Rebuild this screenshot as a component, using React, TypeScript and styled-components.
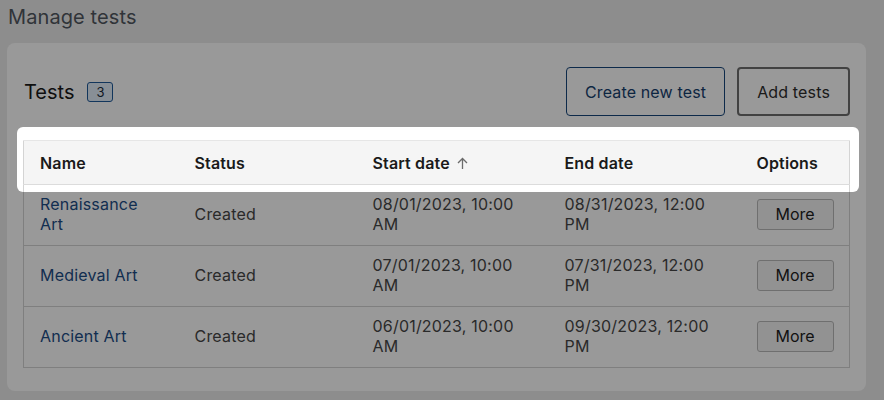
import React from 'react';
import styled, { createGlobalStyle } from 'styled-components';

const GlobalStyle = createGlobalStyle`
  html, body {
    margin: 0;
    padding: 0;
    min-height: 100%;
    background: #ececec;
    font-family: Inter, "Noto Sans", "Liberation Sans", sans-serif;
  }
`;

// Page frame
const Page = styled.div`
  box-sizing: border-box;
  min-height: 100vh;
  padding: 5px 18px 9px 7px;
`;

const PageTitle = styled.h1`
  margin: 0 0 14px 1px;
  font-size: 20px;
  line-height: 24px;
  font-weight: 400;
  letter-spacing: 0.1px;
  color: #51575f;
`;

// The white card that holds the list
const Card = styled.section`
  background: #ffffff;
  border-radius: 8px;
  padding: 24px 16px 23px 16px;
`;

const CardHeader = styled.div`
  display: flex;
  align-items: center;
  justify-content: space-between;
  margin-bottom: 24px;
`;

const TitleGroup = styled.div`
  display: flex;
  align-items: center;
  gap: 13px;
  padding-left: 1px;
`;

const CardTitle = styled.h2`
  margin: 0;
  font-size: 20px;
  line-height: 26px;
  font-weight: 400;
  color: #1a1a1a;
`;

const CountBadge = styled.span`
  display: inline-flex;
  align-items: center;
  justify-content: center;
  box-sizing: border-box;
  width: 26px;
  height: 20px;
  border: 1px solid #1f5a9a;
  border-radius: 3px;
  background: #e3eefa;
  font-size: 13px;
  color: #1d2b3a;
`;

const Actions = styled.div`
  display: flex;
  gap: 12px;
`;

// variant decides the border look of the two top buttons
const ActionButton = styled.button<{ $variant: 'primary' | 'plain' }>`
  box-sizing: border-box;
  height: 49px;
  padding: 0 18px;
  background: #ffffff;
  border-radius: 4px;
  border: ${p => (p.$variant === 'primary' ? '1px solid #17477c' : '2px solid #6f6f6f')};
  color: ${p => (p.$variant === 'primary' ? '#17406e' : '#2d2d2d')};
  font-family: inherit;
  font-size: 16px;
  letter-spacing: 0.15px;
  cursor: pointer;
`;

// Table
const TableWrap = styled.div`
  position: relative;
`;

const Table = styled.table`
  width: 100%;
  border-collapse: collapse;
  table-layout: fixed;
  border: 1px solid #d4d4d4;
`;

const Th = styled.th`
  background: #f5f5f5;
  text-align: left;
  font-size: 16px;
  line-height: 20px;
  font-weight: 600;
  letter-spacing: 0.15px;
  color: #1a1a1a;
  padding: 12px 16px 11px 16px;
  border-top: 1px solid #e6e6e6;
  border-bottom: 1px solid #dcdcdc;
`;

const SortIcon = styled.svg`
  margin-left: 7px;
  vertical-align: -1px;
`;

const Td = styled.td`
  font-size: 16px;
  line-height: 20px;
  letter-spacing: 0.2px;
  color: #474747;
  padding: 9px 16px 11px 16px;
  border-bottom: 1px solid #d4d4d4;
  vertical-align: middle;
`;

const TestLink = styled.a`
  color: #1d4d86;
  text-decoration: none;
  cursor: pointer;
`;

const MoreButton = styled.button`
  box-sizing: border-box;
  width: 77px;
  height: 31px;
  background: #f4f4f4;
  border: 1px solid #b9b9b9;
  border-radius: 3px;
  font-family: inherit;
  font-size: 16px;
  color: #1e1e1e;
  cursor: pointer;
`;

// Tour spotlight over the table header
const Spotlight = styled.div`
  position: absolute;
  top: -13px;
  left: -6px;
  right: -9px;
  height: 65px;
  border-radius: 6px;
  box-shadow: 0 0 0 3000px rgba(0, 0, 0, 0.4);
  pointer-events: none;
  z-index: 10;
`;

const tests = [
  { name: 'Renaissance Art', status: 'Created', start: '08/01/2023, 10:00 AM', end: '08/31/2023, 12:00 PM' },
  { name: 'Medieval Art', status: 'Created', start: '07/01/2023, 10:00 AM', end: '07/31/2023, 12:00 PM' },
  { name: 'Ancient Art', status: 'Created', start: '06/01/2023, 10:00 AM', end: '09/30/2023, 12:00 PM' },
];

export default function App() {
  return (
    <>
      <GlobalStyle />
      <Page>
        <PageTitle>Manage tests</PageTitle>
        <Card>
          <CardHeader>
            <TitleGroup>
              <CardTitle>Tests</CardTitle>
              <CountBadge>{tests.length}</CountBadge>
            </TitleGroup>
            <Actions>
              <ActionButton $variant="primary">Create new test</ActionButton>
              <ActionButton $variant="plain">Add tests</ActionButton>
            </Actions>
          </CardHeader>
          <TableWrap>
            <Table>
              <colgroup>
                <col style={{ width: 155 }} />
                <col style={{ width: 178 }} />
                <col style={{ width: 192 }} />
                <col style={{ width: 192 }} />
                <col />
              </colgroup>
              <thead>
                <tr>
                  <Th>Name</Th>
                  <Th>Status</Th>
                  <Th>
                    Start date
                    <SortIcon width="11" height="13" viewBox="0 0 11 13" fill="none">
                      <path d="M5.5 12V1.5M1 6l4.5-4.5L10 6" stroke="#6b6b6b" strokeWidth="1.3" />
                    </SortIcon>
                  </Th>
                  <Th>End date</Th>
                  <Th>Options</Th>
                </tr>
              </thead>
              <tbody>
                {tests.map(t => (
                  <tr key={t.name}>
                    <Td>
                      <TestLink>{t.name}</TestLink>
                    </Td>
                    <Td>{t.status}</Td>
                    <Td>{t.start}</Td>
                    <Td>{t.end}</Td>
                    <Td>
                      <MoreButton>More</MoreButton>
                    </Td>
                  </tr>
                ))}
              </tbody>
            </Table>
            <Spotlight />
          </TableWrap>
        </Card>
      </Page>
    </>
  );
}
